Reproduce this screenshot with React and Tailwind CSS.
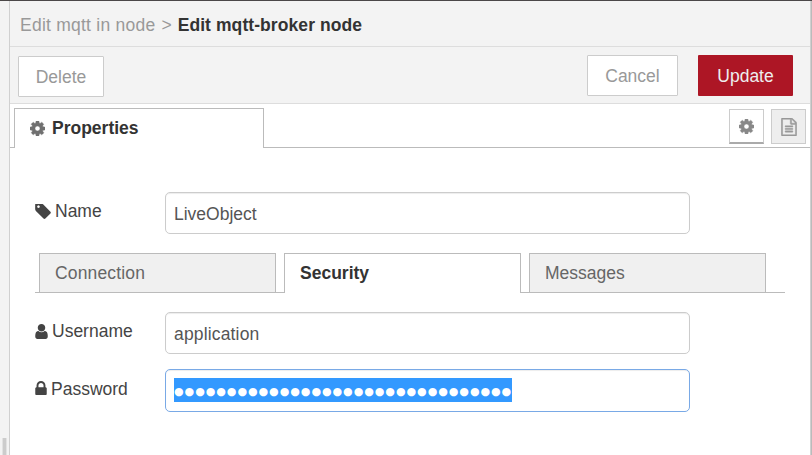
const COG =
  "M1024 896q0-106-75-181t-181-75-181 75-75 181 75 181 181 75 181-75 75-181zm512-109v222q0 12-8 23t-20 13l-185 28q-19 54-39 91 35 50 107 138 10 12 10 25t-9 23q-27 37-99 108t-94 71q-12 0-26-9l-138-108q-44 23-91 38-16 136-29 186-7 28-36 28h-222q-14 0-24.5-8.5t-11.5-21.5l-28-184q-49-16-90-37l-141 107q-10 9-25 9-14 0-25-11-126-114-165-168-7-10-7-23 0-12 8-23 15-21 51-66.5t54-70.5q-27-50-41-99l-183-27q-13-2-21-12.5t-8-23.5v-222q0-12 8-23t19-13l186-28q14-46 39-92-40-57-107-138-10-12-10-24 0-10 9-23 26-36 98.5-107.5t94.5-71.5q13 0 26 10l138 107q44-23 91-38 16-136 29-186 7-28 36-28h222q14 0 24.5 8.5t11.5 21.5l28 184q49 16 90 37l142-107q9-9 24-9 13 0 25 10 129 119 165 170 7 8 7 22 0 12-8 23-15 21-51 66.5t-54 70.5q26 50 41 98l183 28q13 2 21 12.5t8 23.5z";
const TAG =
  "M576 448q0-53-37.5-90.5t-90.5-37.5-90.5 37.5-37.5 90.5 37.5 90.5 90.5 37.5 90.5-37.5 37.5-90.5zm1067 576q0 53-37 90l-491 492q-39 37-91 37-53 0-90-37l-715-716q-38-37-64.5-101t-26.5-117v-416q0-52 38-90t90-38h416q53 0 117 26.5t102 64.5l715 714q37 39 37 91z";
const LOCK =
  "M640 768h512v-192q0-106-75-181t-181-75-181 75-75 181v192zm832 96v576q0 40-28 68t-68 28h-960q-40 0-68-28t-28-68v-576q0-40 28-68t68-28h32v-192q0-184 132-316t316-132 316 132 132 316v192h32q40 0 68 28t28 68z";
const USER =
  "M1536 1399q0 109-62.5 187t-150.5 78h-854q-88 0-150.5-78t-62.5-187q0-85 8.5-160.5t31.5-152 58.5-131 94-89 134.5-34.5q131 128 313 128t313-128q76 0 134.5 34.5t94 89 58.5 131 31.5 152 8.5 160.5zm-256-887q0 159-112.5 271.5t-271.5 112.5-271.5-112.5-112.5-271.5 112.5-271.5 271.5-112.5 271.5 112.5 112.5 271.5z";
const FILE =
  "M1596 380q28 28 48 76t20 88v1152q0 40-28 68t-68 28h-1344q-40 0-68-28t-28-68v-1600q0-40 28-68t68-28h896q40 0 88 20t76 48zm-444-244v376h376q-10-29-22-41l-313-313q-12-12-41-22zm384 1528v-1024h-416q-40 0-68-28t-28-68v-416h-768v1536h1280zm-1024-864q0-14 9-23t23-9h704q14 0 23 9t9 23v64q0 14-9 23t-23 9h-704q-14 0-23-9t-9-23v-64zm736 224q14 0 23 9t9 23v64q0 14-9 23t-23 9h-704q-14 0-23-9t-9-23v-64q0-14 9-23t23-9h704zm0 256q14 0 23 9t9 23v64q0 14-9 23t-23 9h-704q-14 0-23-9t-9-23v-64q0-14 9-23t23-9h704z";

function Icon({ d, box, className }) {
  return (
    <svg viewBox={box} className={"shrink-0 " + className} fill="currentColor" aria-hidden="true">
      <path d={d} />
    </svg>
  );
}

function Field({ icon, label, className, children }) {
  return (
    <div className={"flex items-start " + className}>
      <label className="flex h-[38px] w-[130px] items-center text-[#444]">
        {icon}
        <span>{label}</span>
      </label>
      {children}
    </div>
  );
}

const inputClass =
  "flex w-[525px] items-center rounded-[5px] border px-2 text-[#555] shadow-[inset_0_1px_1px_rgba(0,0,0,0.075)] ";

export default function App() {
  return (
    <div className="flex h-[455px] w-[812px] flex-col overflow-hidden border-t border-[#4b4748] bg-white font-['Liberation_Sans',Arial,sans-serif] text-[17.5px] leading-[25px] whitespace-nowrap">
      <div className="flex flex-1">
        <div className="flex w-[10px] items-end border-r border-[#d0d0d0] bg-[#f3f3f3] pl-[2px]">
          <div className="h-[17px] w-[5px] border-x border-[#e2e2e2] bg-[#ccc]" />
        </div>
        <div className="flex w-[800px] flex-col">
          <header className="flex h-[46px] items-center border-b border-[#ddd] bg-[#f3f3f3] pl-[10px] pt-1 text-[#999]">
            <span className="tracking-[0.24px]">Edit mqtt in node</span>
            <span className="ml-[6px]">&gt;</span>
            <span className="ml-[6px] font-bold tracking-[0.08px] text-[#333]">Edit mqtt-broker node</span>
          </header>
          <div className="flex h-[57px] items-start border-b border-[#ddd] bg-[#f3f3f3] pt-2 pl-2">
            <button className="mt-px h-[41px] w-[86px] rounded-[1px] border border-[#ccc] bg-white pt-[2px] text-[#999]">Delete</button>
            <button className="ml-[483px] h-[41px] w-[91px] rounded-[1px] border border-[#ccc] bg-white pt-[2px] text-[#999]">Cancel</button>
            <button className="ml-5 h-[41px] w-[95px] rounded-[1px] bg-[#ad1625] pt-[2px] text-[#eee]">Update</button>
          </div>
          <div className="flex h-[44px] pt-1">
            <div className="w-1 border-b border-[#bbb]" />
            <div className="flex w-[250px] items-center border-x border-t border-[#bbb] pl-[15px] font-bold text-[#333]">
              <Icon d={COG} box="0 128 1536 1536" className="mr-[7px] h-[15px] w-[15px] stroke-[#707070] stroke-[50px] text-[#707070]" />
              Properties
            </div>
            <div className="flex flex-1 items-start justify-end gap-[7px] border-b border-[#bbb] pt-px pr-1">
              <button className="flex h-[35px] w-[35px] items-center justify-center border border-b-2 border-[#ccc] border-b-[#aaa] text-[#888]">
                <Icon d={COG} box="0 128 1536 1536" className="h-[15px] w-[15px] stroke-[#888] stroke-[50px]" />
              </button>
              <button className="flex h-[35px] w-[35px] items-center justify-center border border-[#ccc] bg-[#eee] text-[#999]">
                <Icon d={FILE} box="128 0 1536 1792" className="h-[18px] w-[16px] stroke-[#999] stroke-[45px]" />
              </button>
            </div>
          </div>
          <div className="flex flex-col pl-[25px] pt-[44px]">
            <Field label="Name" className="h-[61px]" icon={<Icon d={TAG} box="128 192 1515 1451" className="mr-1 h-[15px] w-[16px]" />}>
              <div className={inputClass + "h-[42px] border-[#ccc] pt-[2px]"}>LiveObject</div>
            </Field>
            <div className="flex h-10 w-[750px]">
              <div className="w-1 border-b border-[#bbb]" />
              <div className="flex w-[237px] items-center border border-[#bbb] bg-[#f0f0f0] pl-[15px] tracking-[0.16px] text-[#666]">Connection</div>
              <div className="w-2 border-b border-[#bbb]" />
              <div className="flex w-[237px] items-center border-x border-t border-[#bbb] pl-[15px] font-bold text-[#333]">Security</div>
              <div className="w-2 border-b border-[#bbb]" />
              <div className="flex w-[237px] items-center border border-[#bbb] bg-[#f0f0f0] pl-[15px] text-[#666]">Messages</div>
              <div className="flex-1 border-b border-[#bbb]" />
            </div>
            <Field label="Username" className="mt-[19px] h-[57px]" icon={<Icon d={USER} box="256 128 1280 1536" className="mr-1 h-[15px] w-[13px]" />}>
              <div className={inputClass + "h-[42px] border-[#ccc] pt-[2px] tracking-[0.16px]"}>application</div>
            </Field>
            <Field label="Password" className="h-[43px] [&>label]:pt-[2px]" icon={<Icon d={LOCK} box="320 128 1152 1408" className="mr-1 mb-[2px] h-[14px] w-[12px]" />}>
              <div className={inputClass + "h-[43px] border-[#79a9e6] pb-px"}>
                <div className="flex h-[24px] w-[338px] items-center overflow-hidden bg-[#3399ff] pt-[3px] font-['DejaVu_Sans',sans-serif] text-[11px] tracking-[0.97px] text-white">
                  <span>{"●".repeat(32)}</span>
                </div>
              </div>
            </Field>
          </div>
        </div>
        <div className="w-[2px] border-r border-[#bbb] bg-[#d0d0d0]" />
      </div>
    </div>
  );
}
